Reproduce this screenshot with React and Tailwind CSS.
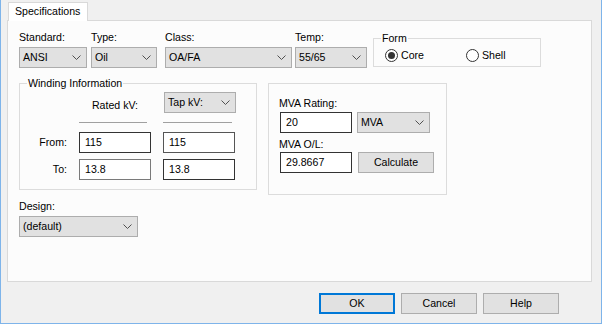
import React from 'react';

function Chevron() {
  return (
    <svg width="9" height="5" viewBox="0 0 9 5" className="shrink-0">
      <polyline points="0.5,0.5 4.5,4.5 8.5,0.5" fill="none" stroke="#505050" strokeWidth="1" />
    </svg>
  );
}

function Combo({ value, className = '' }) {
  return (
    <div className={`flex h-[21px] items-center justify-between border border-[#adadad] bg-[#e1e1e1] pl-[3px] pr-[5px] ${className}`}>
      <span>{value}</span>
      <Chevron />
    </div>
  );
}

function Field({ value, className = '' }) {
  return (
    <div className={`flex h-[21px] w-[72px] items-center border bg-white pl-[5px] ${className}`}>{value}</div>
  );
}

function Radio({ checked, label }) {
  return (
    <div className="flex items-center">
      <span className="flex h-[13px] w-[13px] items-center justify-center rounded-full border border-[#333] bg-white">
        {checked && <span className="h-[7px] w-[7px] rounded-full bg-[#333]" />}
      </span>
      <span className="ml-[3px] leading-[15px]">{label}</span>
    </div>
  );
}

function Button({ children, primary }) {
  return (
    <div
      className={`flex h-[21px] w-[76px] items-center justify-center bg-[#e1e1e1] ${
        primary ? 'border-2 border-[#0078d7]' : 'border border-[#adadad]'
      }`}
    >
      {children}
    </div>
  );
}

function Label({ children, className = '' }) {
  return <div className={`h-[15px] leading-[15px] ${className}`}>{children}</div>;
}

export default function App() {
  return (
    <div className="h-[324px] w-[602px] border-x border-b border-[#7eb4ea] bg-[#f0f0f0] pl-[6px] pt-[2px] font-['Liberation_Sans',Arial,sans-serif] text-[10.6px] text-black">
      {/* tab header */}
      <div className="relative z-10 -mb-px ml-px flex h-[19px] w-[80px] items-center border border-b-0 border-[#d9d9d9] bg-white pl-[6px]">
        Specifications
      </div>

      {/* tab page */}
      <div className="h-[262px] w-[585px] border border-[#d9d9d9] bg-[#fcfcfc] pl-[11px] pt-[9px]">
        <div className="flex items-start">
          <div className="w-[68px]">
            <Label>Standard:</Label>
            <Combo value="ANSI" className="mt-[2px] w-[68px]" />
          </div>
          <div className="ml-[4px] w-[66px]">
            <Label>Type:</Label>
            <Combo value="Oil" className="mt-[2px] w-[66px]" />
          </div>
          <div className="ml-[8px] w-[127px]">
            <Label>Class:</Label>
            <Combo value="OA/FA" className="mt-[2px] w-[127px]" />
          </div>
          <div className="ml-[3px] w-[72px]">
            <Label>Temp:</Label>
            <Combo value="55/65" className="mt-[2px] w-[72px]" />
          </div>
          <div className="relative ml-[6px] mt-[8px] h-[29px] w-[168px] border border-[#dcdcdc] pl-[11px] pt-[9px]">
            <span className="absolute left-[7px] top-[-8px] bg-[#fcfcfc] px-px leading-[15px]">Form</span>
            <div className="flex">
              <div className="w-[81px]">
                <Radio checked label="Core" />
              </div>
              <Radio label="Shell" />
            </div>
          </div>
        </div>

        <div className="mt-[15px] flex items-start">
          {/* winding information */}
          <div className="relative h-[107px] w-[238px] border border-[#dcdcdc] pt-[8px]">
            <span className="absolute left-[7px] top-[-8px] bg-[#fcfcfc] px-px leading-[15px]">Winding Information</span>
            <div className="flex h-[21px]">
              <div className="w-[59px]" />
              <div className="w-[72px] pt-[6px] text-center leading-[15px]">Rated kV:</div>
              <Combo value="Tap kV:" className="ml-[13px] w-[72px]" />
            </div>
            <div className="mt-[9px] flex">
              <div className="w-[59px]" />
              <div className="h-px w-[68px] bg-[#a0a0a0]" />
              <div className="ml-[16px] h-px w-[69px] bg-[#a0a0a0]" />
            </div>
            <div className="mt-[9px] flex items-center">
              <div className="w-[59px] pr-[12px] text-right">From:</div>
              <Field value="115" className="border-[#333]" />
              <Field value="115" className="ml-[12px] border-[#555]" />
            </div>
            <div className="mt-[6px] flex items-center">
              <div className="w-[59px] pr-[12px] text-right">To:</div>
              <Field value="13.8" className="border-[#7a7a7a]" />
              <Field value="13.8" className="ml-[12px] border-[#333]" />
            </div>
          </div>

          {/* mva */}
          <div className="ml-[11px] h-[112px] w-[179px] border border-[#dcdcdc] pl-[11px] pt-[12px]">
            <Label className="-ml-px">MVA Rating:</Label>
            <div className="mt-px flex items-center">
              <Field value="20" className="h-[20px] border-[#333]" />
              <Combo value="MVA" className="ml-[5px] h-[20px] w-[73px]" />
            </div>
            <Label className="mt-[4px] -ml-px">MVA O/L:</Label>
            <div className="flex h-[21px] items-center">
              <Field value="29.8667" className="h-[20px] border-[#333]" />
              <div className="ml-[6px]">
                <Button>Calculate</Button>
              </div>
            </div>
          </div>
        </div>

        <Label className="mt-[4px]">Design:</Label>
        <Combo value="(default)" className="mt-[2px] w-[119px]" />
      </div>

      <div className="mt-[11px] flex justify-end gap-[6px] pr-[42px]">
        <Button primary>OK</Button>
        <Button>Cancel</Button>
        <Button>Help</Button>
      </div>
    </div>
  );
}
